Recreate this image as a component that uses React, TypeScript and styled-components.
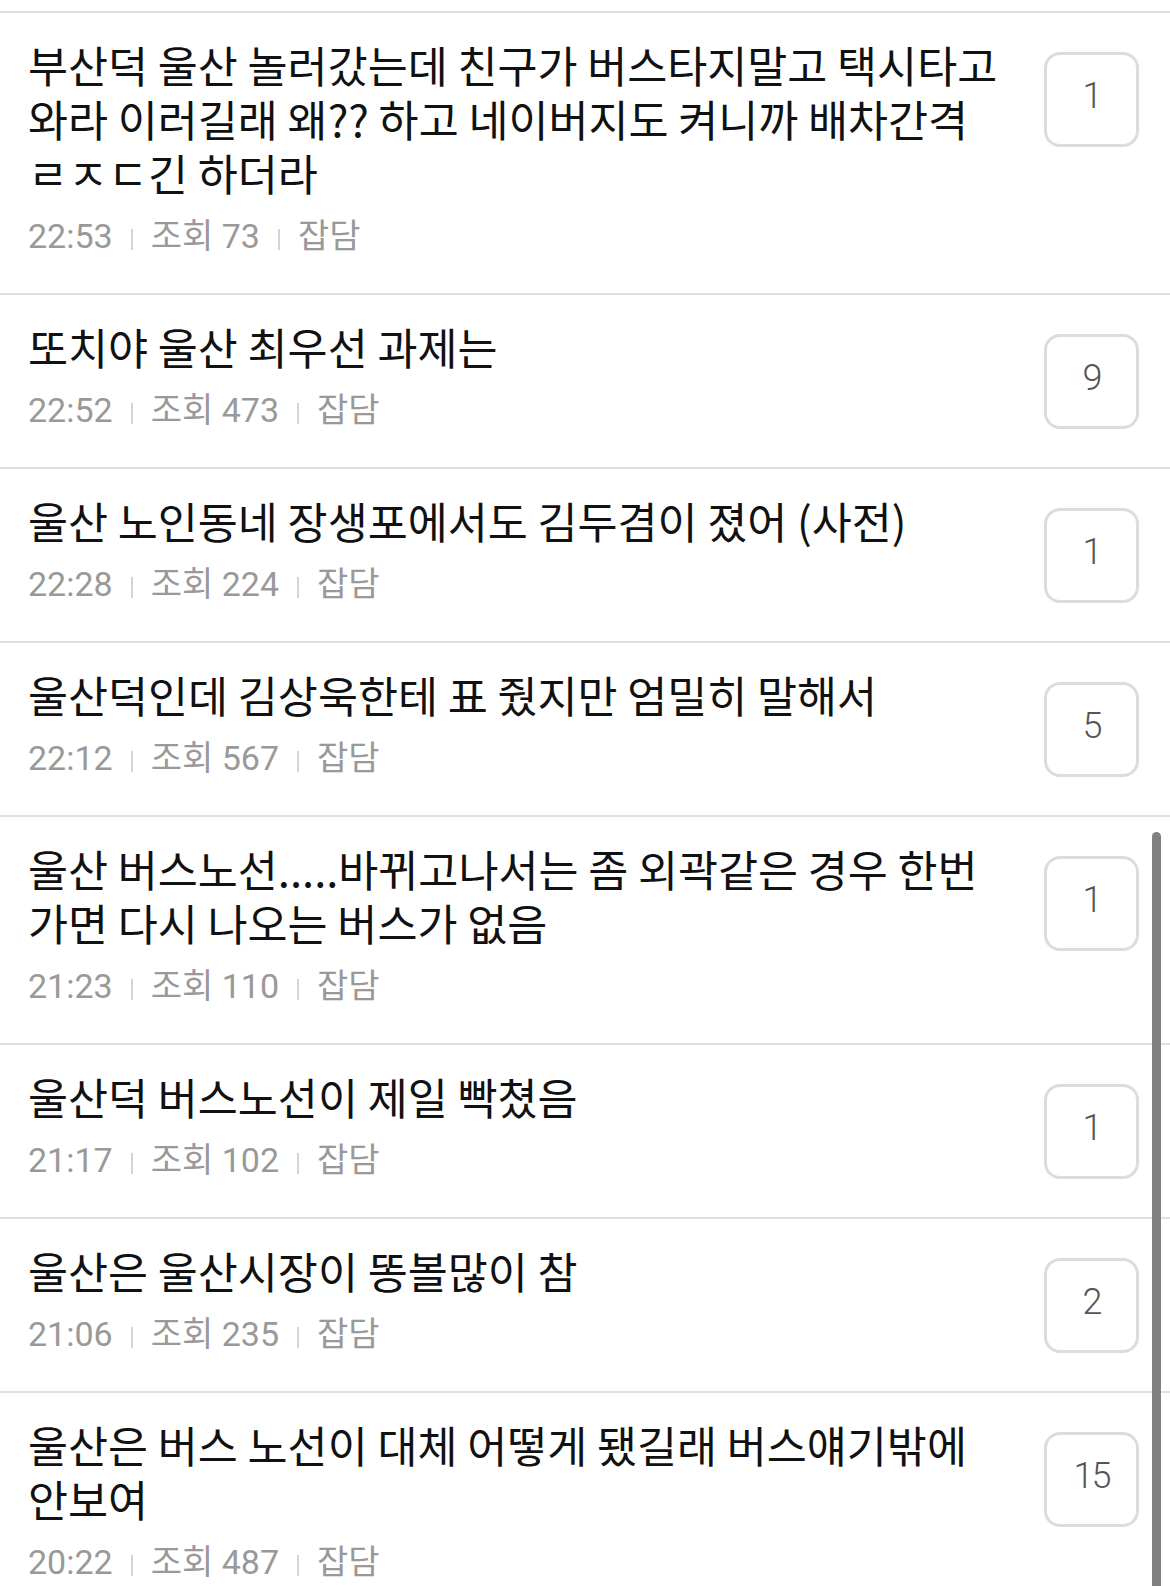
import styled, { createGlobalStyle } from 'styled-components';

const GlobalStyle = createGlobalStyle`
  html, body {
    margin: 0;
    padding: 0;
    background: #fff;
    height: 1586px;
    overflow: hidden;
  }
  body {
    font-family: Roboto, 'Noto Sans CJK KR', sans-serif;
  }
`;

const Screen = styled.div`
  position: relative;
  width: 1170px;
  height: 1586px;
  overflow: hidden;
`;

const List = styled.ul`
  list-style: none;
  margin: 0;
  padding: 11px 0 0;
`;

const Item = styled.li`
  display: flex;
  align-items: flex-start;
  gap: 16px;
  border-top: 2px solid #e0e0e0;
  padding: 25px 31px 35.5px 28px;
`;

const Body = styled.div`
  flex: 1;
  min-width: 0;
`;

const Title = styled.div`
  font-family: 'Noto Sans CJK KR', sans-serif;
  font-size: 43.5px;
  line-height: 54px;
  color: #111;
`;

const TitleLine = styled.span`
  display: block;
  white-space: nowrap;
`;

const Meta = styled.div`
  display: flex;
  align-items: center;
  margin-top: 13.5px;
  font-size: 34px;
  line-height: 44px;
  color: #999;
`;

const Sep = styled.span`
  display: inline-block;
  width: 2px;
  height: 21px;
  margin: 8px 18px 0;
  background: #d4d4d4;
`;

const Count = styled.div`
  flex: none;
  width: 95px;
  height: 95px;
  box-sizing: border-box;
  margin-top: 14px;
  border: 3px solid #dcdcdc;
  border-radius: 16px;
  display: flex;
  align-items: center;
  justify-content: center;
  padding-bottom: 8px;
  font-size: 36px;
  font-weight: 300;
  color: #555;
  letter-spacing: -2px;
`;

const ScrollThumb = styled.div`
  position: absolute;
  right: 9px;
  top: 832px;
  width: 9px;
  height: 800px;
  border-radius: 5px;
  background: #808080;
`;

type Post = {
  lines: string[];
  time: string;
  views: number;
  category: string;
  comments: number;
};

const posts: Post[] = [
  {
    lines: [
      '부산덕 울산 놀러갔는데 친구가 버스타지말고 택시타고',
      '와라 이러길래 왜?? 하고 네이버지도 켜니까 배차간격',
      'ㄹㅈㄷ긴 하더라',
    ],
    time: '22:53',
    views: 73,
    category: '잡담',
    comments: 1,
  },
  { lines: ['또치야 울산 최우선 과제는'], time: '22:52', views: 473, category: '잡담', comments: 9 },
  {
    lines: ['울산 노인동네 장생포에서도 김두겸이 졌어 (사전)'],
    time: '22:28',
    views: 224,
    category: '잡담',
    comments: 1,
  },
  {
    lines: ['울산덕인데 김상욱한테 표 줬지만 엄밀히 말해서'],
    time: '22:12',
    views: 567,
    category: '잡담',
    comments: 5,
  },
  {
    lines: ['울산 버스노선.....바뀌고나서는 좀 외곽같은 경우 한번', '가면 다시 나오는 버스가 없음'],
    time: '21:23',
    views: 110,
    category: '잡담',
    comments: 1,
  },
  { lines: ['울산덕 버스노선이 제일 빡쳤음'], time: '21:17', views: 102, category: '잡담', comments: 1 },
  { lines: ['울산은 울산시장이 똥볼많이 참'], time: '21:06', views: 235, category: '잡담', comments: 2 },
  {
    lines: ['울산은 버스 노선이 대체 어떻게 됐길래 버스얘기밖에', '안보여'],
    time: '20:22',
    views: 487,
    category: '잡담',
    comments: 15,
  },
];

const App = () => {
  return (
    <>
      <GlobalStyle />
      <Screen>
        <List>
          {posts.map((post, i) => (
            <Item key={i}>
              <Body>
                <Title>
                  {post.lines.map((line, j) => (
                    <TitleLine key={j}>{line}</TitleLine>
                  ))}
                </Title>
                <Meta>
                  <span>{post.time}</span>
                  <Sep />
                  <span>조회 {post.views}</span>
                  <Sep />
                  <span>{post.category}</span>
                </Meta>
              </Body>
              <Count>{post.comments}</Count>
            </Item>
          ))}
        </List>
        <ScrollThumb />
      </Screen>
    </>
  );
};

export default App;
